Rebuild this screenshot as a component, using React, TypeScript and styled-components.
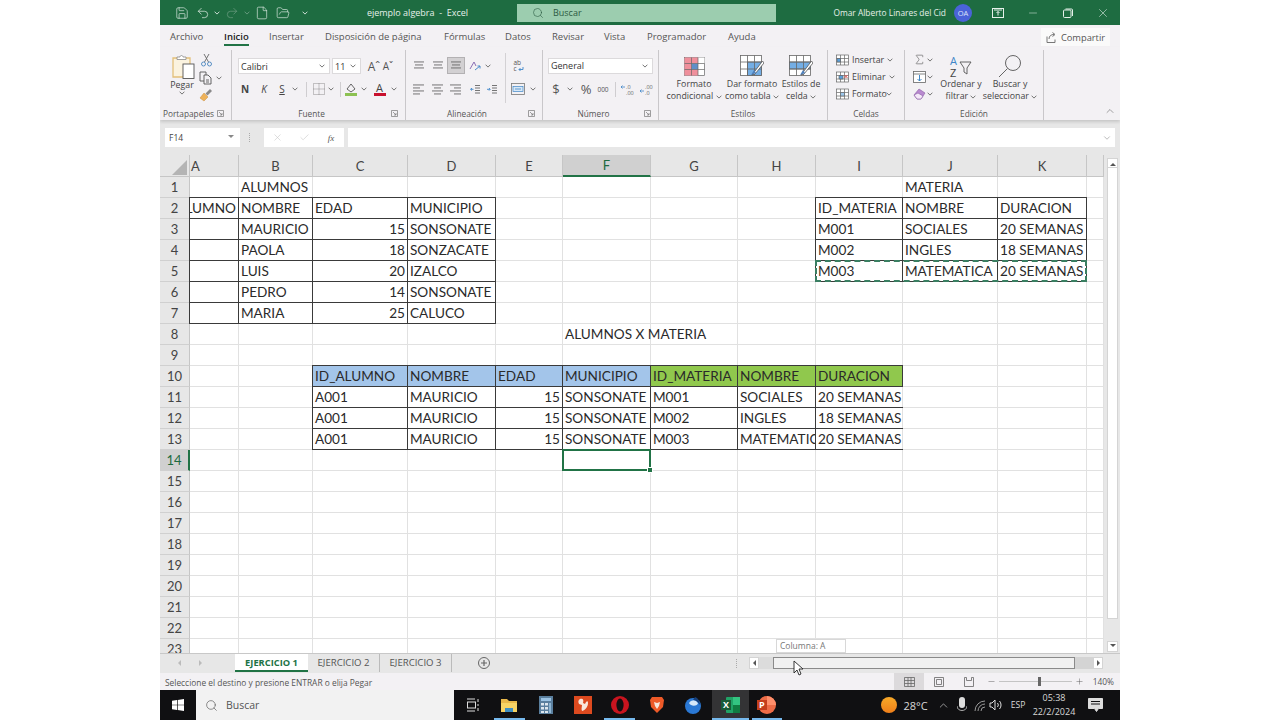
import React from "react";
import styled, { createGlobalStyle } from "styled-components";
import { Save, Undo2, Redo2, File, FolderOpen, Search, Minus, X, Check, ChevronUp, ChevronDown, Plus, Sigma } from "lucide-react";

const GlobalStyle = createGlobalStyle`
	html, body {
		margin: 0;
		padding: 0;
		background: #fff;
		overflow: hidden;
	}
`;

const UI_FONT = `"Open Sans", "Noto Sans", "Liberation Sans", sans-serif`;

const Window = styled.div`
	position: relative;
	width: 960px;
	height: 720px;
	margin: 0 auto;
	display: flex;
	flex-direction: column;
	font-family: ${UI_FONT};
	font-size: 9px;
	color: #444;
	background: #f3f1f4;
	overflow: hidden;
`;

const Slot = styled.div<{ $w: number; $color?: string }>`
	width: ${p => p.$w}px;
	flex: none;
	display: flex;
	align-items: center;
	justify-content: center;
	color: ${p => p.$color || "inherit"};
	svg {
		flex: none;
	}
`;

const Caret = ({ c = "#666" }: { c?: string }) => (
	<svg width="6" height="4" viewBox="0 0 6 4"><path d="M.6.7 3 3.1 5.4.7" fill="none" stroke={c} strokeWidth=".9" /></svg>
);

/* ---------- title bar ---------- */
const TitleBar = styled.div`
	height: 25px;
	flex: none;
	display: flex;
	align-items: center;
	padding-left: 12px;
	background: #1e6c41;
	color: #e6f0ea;
`;

const DocTitle = styled.div`
	width: 199px;
	flex: none;
	text-align: center;
	font-size: 9px;
	white-space: pre;
`;

const SearchBox = styled.div`
	width: 259px;
	height: 18px;
	flex: none;
	display: flex;
	align-items: center;
	background: #9ccdaf;
	color: #2c5a42;
	font-size: 9px;
	padding-left: 15px;
	box-sizing: border-box;
	gap: 9px;
`;

const UserName = styled.div`
	margin-left: auto;
	margin-right: 8px;
	font-size: 8.4px;
	white-space: nowrap;
`;

const Avatar = styled.div`
	width: 18px;
	height: 18px;
	margin-right: 9px;
	border-radius: 50%;
	background: #4a63d8;
	color: #dfe4fa;
	font-size: 7.5px;
	display: flex;
	align-items: center;
	justify-content: center;
	flex: none;
`;

/* ---------- tabs ---------- */
const TabRow = styled.div`
	height: 22px;
	flex: none;
	display: flex;
	align-items: flex-start;
	padding: 4px 0 0 10px;
	box-sizing: border-box;
`;

const RibbonTab = styled.div<{ $w: number; $active?: boolean }>`
	width: ${p => p.$w}px;
	flex: none;
	font-size: 9.5px;
	white-space: nowrap;
	color: ${p => (p.$active ? "#222" : "#555")};
	font-weight: ${p => (p.$active ? 600 : 400)};
	line-height: 15px;
	span {
		display: inline-block;
		border-bottom: ${p => (p.$active ? "2px solid #217346" : "2px solid transparent")};
	}
`;

const ShareButton = styled.div`
	margin-left: auto;
	margin-right: 10px;
	width: 69px;
	height: 18px;
	margin-top: -1px;
	background: #fafafa;
	display: flex;
	align-items: center;
	justify-content: center;
	gap: 4px;
	font-size: 9.3px;
	color: #555;
`;

/* ---------- ribbon ---------- */
const Ribbon = styled.div`
	height: 73px;
	flex: none;
	display: flex;
	position: relative;
	box-shadow: 0 2px 3px rgba(0, 0, 0, .14);
	z-index: 1;
`;

const Group = styled.div<{ $w: number; $last?: boolean }>`
	width: ${p => p.$w}px;
	flex: none;
	box-sizing: border-box;
	display: flex;
	flex-direction: column;
	height: 70px;
	margin-top: 3px;
	border-right: ${p => (p.$last ? "none" : "1px solid #c9c7ca")};
`;

const GroupBody = styled.div<{ $pad?: number }>`
	height: 57px;
	flex: none;
	display: flex;
	padding-left: ${p => p.$pad || 0}px;
`;

const GroupFooter = styled.div<{ $launcher?: boolean }>`
	flex: 1;
	display: grid;
	grid-template-columns: 1fr ${p => (p.$launcher ? "14px" : "0")};
	align-items: center;
	text-align: center;
	font-size: 8.3px;
	color: #555;
`;

const Launcher = () => (
	<svg width="7" height="7" viewBox="0 0 7 7"><path d="M.5.5h6v6h-6zM2 2l3 3M5 3v2H3" fill="none" stroke="#777" strokeWidth=".7" /></svg>
);

const Column = styled.div<{ $top?: number; $gap?: number; $w?: number }>`
	display: flex;
	flex-direction: column;
	padding-top: ${p => p.$top || 0}px;
	gap: ${p => p.$gap || 0}px;
	${p => (p.$w ? `width: ${p.$w}px; flex: none;` : "")}
`;

const ToolRow = styled.div<{ $h?: number }>`
	display: flex;
	align-items: center;
	height: ${p => p.$h || 16}px;
`;

const ToolSep = styled(Slot)`
	&::before {
		content: "";
		display: block;
		width: 1px;
		height: 15px;
		background: #cfcdd0;
	}
`;

const GroupDivider = styled.div`
	width: 1px;
	height: 50px;
	margin-top: 3px;
	flex: none;
	background: #d3d1d4;
`;

const ActiveTool = styled(Slot)`
	height: 17px;
	background: #d2d0d2;
	border: 1px solid #b3b1b3;
	box-sizing: border-box;
`;

const Select = styled.div<{ $w: number; $ml?: number }>`
	width: ${p => p.$w}px;
	height: 16px;
	margin-left: ${p => p.$ml || 0}px;
	flex: none;
	box-sizing: border-box;
	background: #fff;
	border: 1px solid #dcdadc;
	display: flex;
	align-items: center;
	justify-content: space-between;
	padding: 0 4px 0 2px;
	font-size: 9px;
	color: #333;
`;

const BigButton = styled.div<{ $w: number }>`
	width: ${p => p.$w}px;
	flex: none;
	display: flex;
	flex-direction: column;
	align-items: center;
	padding-top: 4px;
	white-space: nowrap;
	font-size: 8.8px;
	line-height: 12px;
	color: #444;
`;

const BigIcon = styled.div<{ $tall?: boolean }>`
	height: ${p => (p.$tall ? 25 : 24)}px;
	display: flex;
	align-items: center;
	justify-content: center;
`;

const CellTool = styled.div`
	height: 17px;
	display: flex;
	align-items: center;
	font-size: 8.8px;
	color: #444;
`;

const CellToolLabel = styled.span<{ $w: number }>`
	width: ${p => p.$w}px;
	margin-left: 3px;
`;

const IconText = styled.text<{ $size: number; $bold?: boolean }>`
	font-family: ${UI_FONT};
	font-size: ${p => p.$size}px;
	font-weight: ${p => (p.$bold ? 700 : 400)};
`;

const BoldLetter = styled.span<{ $italic?: boolean; $under?: boolean }>`
	font-size: 10px;
	font-family: ${UI_FONT};
	font-weight: ${p => (p.$italic || p.$under ? 400 : 700)};
	font-style: ${p => (p.$italic ? "italic" : "normal")};
	text-decoration: ${p => (p.$under ? "underline" : "none")};
	color: #444;
`;

const GrowA = styled.span<{ $size: number }>`
	font-size: ${p => p.$size}px;
	color: #555;
`;

const Lines = ({ rows }: { rows: [number, number][] }) => (
	<svg width="12" height="12" viewBox="0 0 12 12">
		{rows.map(([x, w], i) => <rect key={i} x={x} y={1.5 + i * 3} width={w} height=".9" fill="#666" />)}
	</svg>
);

/* ---------- formula bar ---------- */
const FormulaBar = styled.div`
	height: 35px;
	flex: none;
	box-sizing: border-box;
	padding: 8px 5px 0 5px;
	display: flex;
	align-items: flex-start;
	background: #e7e7e7;
`;

const NameBox = styled.div`
	width: 75px;
	height: 19px;
	flex: none;
	background: #fff;
	box-sizing: border-box;
	padding: 0 6px 0 4px;
	display: flex;
	align-items: center;
	justify-content: space-between;
	font-size: 8.5px;
	color: #444;
`;

const FormulaTools = styled.div`
	width: 80px;
	height: 19px;
	margin-left: 13px;
	flex: none;
	background: #fff;
	display: flex;
	align-items: center;
	font-family: "Liberation Serif", serif;
	font-style: italic;
	font-size: 9px;
`;

const FormulaInput = styled.div`
	flex: 1;
	height: 19px;
	margin-left: 4px;
	background: #fff;
	display: flex;
	align-items: center;
	justify-content: flex-end;
	padding-right: 3px;
`;

const Dots = styled.div`
	width: 1px;
	height: 9px;
	margin: 5px 0 0 9px;
	flex: none;
	border-left: 1px dotted #aaa;
`;

/* ---------- sheet ---------- */
const SheetRow = styled.div`
	height: 498px;
	flex: none;
	display: flex;
	background: #e7e7e7;
`;

const COLS = [30, 49, 74, 95, 88, 67, 88, 87, 78, 87, 95, 89, 17];
const LETTERS = ["A", "B", "C", "D", "E", "F", "G", "H", "I", "J", "K", ""];

const Grid = styled.div`
	position: relative;
	width: 944px;
	height: 498px;
	flex: none;
	overflow: hidden;
	display: grid;
	grid-template-columns: ${COLS.map(c => c + "px").join(" ")};
	grid-template-rows: 22px;
	grid-auto-rows: 21px;
	background: #fff;
	font-family: Lato, Carlito, "Liberation Sans", sans-serif;
	font-size: 13.6px;
	color: #2a2a2a;
`;

const Corner = styled.div`
	background: #e7e7e7;
	border-right: 1px solid #c6c6c6;
	border-bottom: 1px solid #c6c6c6;
	box-sizing: border-box;
	display: flex;
	align-items: flex-end;
	justify-content: flex-end;
	padding: 0 2px 1px 0;
`;

const ColHead = styled.div<{ $on?: boolean; $left?: boolean }>`
	box-sizing: border-box;
	background: ${p => (p.$on ? "#d0d0d0" : "#e7e7e7")};
	border-right: 1px solid #c6c6c6;
	border-bottom: ${p => (p.$on ? "2px solid #217346" : "1px solid #c6c6c6")};
	color: ${p => (p.$on ? "#1d6a3f" : "#444")};
	display: flex;
	align-items: center;
	justify-content: ${p => (p.$left ? "flex-start" : "center")};
	padding-left: ${p => (p.$left ? "1px" : "0")};
	font-size: 13px;
`;

const RowHead = styled.div<{ $on?: boolean }>`
	box-sizing: border-box;
	background: ${p => (p.$on ? "#d0d0d0" : "#e7e7e7")};
	border-right: ${p => (p.$on ? "2px solid #217346" : "1px solid #c6c6c6")};
	border-bottom: 1px solid #d0d0d0;
	color: ${p => (p.$on ? "#1d6a3f" : "#444")};
	display: flex;
	align-items: center;
	justify-content: center;
	font-size: 13px;
`;

const Cell = styled.div<{ $box?: boolean; $open?: boolean; $fill?: string; $active?: boolean }>`
	position: relative;
	box-sizing: border-box;
	min-width: 0;
	background: ${p => p.$fill || "transparent"};
	border-right: 1px solid #e1e1e1;
	border-bottom: 1px solid #e1e1e1;
	${p => p.$box && `
		&::after {
			content: "";
			position: absolute;
			left: -1px;
			top: -1px;
			right: -1px;
			bottom: -1px;
			border: 1px solid #3a3a3a;
			${p.$open ? "border-right: none;" : ""}
		}
	`}
	${p => p.$active && `
		&::after {
			content: "";
			position: absolute;
			left: -1px;
			top: -1px;
			right: -1px;
			bottom: -1px;
			border: 2px solid #217346;
			z-index: 2;
		}
	`}
`;

const CellText = styled.div<{ $align?: string; $spill?: boolean }>`
	height: 20px;
	line-height: 21px;
	white-space: nowrap;
	display: flex;
	justify-content: ${p => (p.$align === "right" ? "flex-end" : "flex-start")};
	padding: ${p => (p.$align === "right" ? "0 2px 0 0" : "0 0 0 2px")};
	overflow: ${p => (p.$spill ? "visible" : "hidden")};
`;

const FillHandle = styled.span`
	position: absolute;
	right: -3px;
	bottom: -3px;
	width: 4px;
	height: 4px;
	background: #217346;
	border: 1px solid #fff;
	z-index: 3;
`;

const MarchingAnts = styled.div`
	position: absolute;
	left: 655px;
	top: 105px;
	width: 272px;
	height: 22px;
	box-sizing: border-box;
	border: 2px dashed #3a7f62;
`;

const VScroll = styled.div`
	width: 16px;
	flex: none;
	display: flex;
	flex-direction: column;
	align-items: flex-start;
	padding: 3px 0 1px 3px;
	box-sizing: border-box;
`;

const ScrollButton = styled.div<{ $w?: number; $h?: number }>`
	width: ${p => p.$w || 11}px;
	height: ${p => p.$h || 11}px;
	flex: none;
	background: #fff;
	border: 1px solid #d4d4d4;
	box-sizing: border-box;
	display: flex;
	align-items: center;
	justify-content: center;
`;

const VThumb = styled.div`
	width: 11px;
	height: 451px;
	flex: none;
	background: #fff;
	margin-bottom: auto;
	box-sizing: border-box;
	border: 1px solid #d4d4d4;
	border-top: none;
`;

const Arrow = styled.span<{ $dir: "up" | "down" | "left" | "right"; $c?: string }>`
	width: 0;
	height: 0;
	border: 3px solid transparent;
	${p => `border-${{ up: "bottom", down: "top", left: "right", right: "left" }[p.$dir]}-color: ${p.$c || "#555"};`}
	${p => `border-${p.$dir}-width: 0;`}
`;

/* ---------- sheet tabs ---------- */
const SheetTabs = styled.div`
	height: 20px;
	flex: none;
	display: flex;
	align-items: flex-start;
	background: #e7e7e7;
	border-top: 1px solid #c8c8c8;
	box-sizing: border-box;
	font-size: 9.6px;
`;

const TabNav = styled.div`
	width: 75px;
	height: 18px;
	flex: none;
	display: flex;
	align-items: center;
	padding-left: 18px;
	box-sizing: border-box;
	gap: 18px;
`;

const SheetTab = styled.div<{ $active?: boolean }>`
	width: ${p => (p.$active ? 73 : 72)}px;
	height: 18px;
	flex: none;
	box-sizing: border-box;
	display: flex;
	align-items: center;
	justify-content: center;
	padding-bottom: ${p => (p.$active ? 0 : 2)}px;
	background: ${p => (p.$active ? "#fff" : "transparent")};
	color: ${p => (p.$active ? "#217346" : "#555")};
	font-weight: ${p => (p.$active ? 700 : 400)};
	font-size: ${p => (p.$active ? 9.3 : 9.6)}px;
	border-bottom: ${p => (p.$active ? "2px solid #217346" : "none")};
	border-right: ${p => (p.$active ? "none" : "1px solid #bbb")};
`;

const AddSheet = styled.div`
	width: 64px;
	height: 18px;
	flex: none;
	display: flex;
	align-items: center;
	justify-content: center;
`;

const HScroll = styled.div`
	margin-left: auto;
	margin-right: 17px;
	margin-top: 3px;
	width: 354px;
	height: 12px;
	flex: none;
	display: flex;
	align-items: stretch;
	position: relative;
`;

const HTrack = styled.div<{ $w: number; $dither?: boolean }>`
	width: ${p => p.$w}px;
	flex: none;
	background: ${p => (p.$dither ? "#d4d4d4" : "#dcdcdc")};
`;

const HThumb = styled.div`
	width: 302px;
	flex: none;
	box-sizing: border-box;
	background: #f1f1f1;
	border: 1px solid #8a8a8a;
`;

const SplitDots = styled.div`
	position: absolute;
	left: -13px;
	top: 2px;
	height: 9px;
	border-left: 1px dotted #aaa;
`;

const Tooltip = styled.div`
	position: absolute;
	left: 616px;
	top: 639px;
	width: 70px;
	height: 14px;
	box-sizing: border-box;
	background: #fff;
	border: 1px solid #d8d8d8;
	font-size: 8.5px;
	color: #777;
	padding-left: 3px;
	line-height: 12px;
`;

const Pointer = styled.svg`
	position: absolute;
	left: 633px;
	top: 660px;
`;

/* ---------- status bar ---------- */
const StatusBar = styled.div`
	height: 17px;
	flex: none;
	display: flex;
	align-items: center;
	padding-left: 5px;
	font-size: 8.4px;
	color: #555;
	white-space: nowrap;
`;

const StatusMessage = styled.div`
	margin-right: auto;
	padding-top: 1px;
`;

const ViewButton = styled.div<{ $on?: boolean }>`
	width: 30px;
	height: 17px;
	flex: none;
	background: ${p => (p.$on ? "#dcdadc" : "transparent")};
	display: flex;
	align-items: center;
	justify-content: center;
`;

const ZoomTrack = styled.div`
	position: relative;
	width: 73px;
	height: 1px;
	background: #c4c4c4;
	flex: none;
`;

const ZoomThumb = styled.span`
	position: absolute;
	left: 39px;
	top: -4px;
	width: 3px;
	height: 9px;
	background: #666;
`;

const ZoomValue = styled.div`
	width: 28px;
	text-align: right;
	margin-right: 6px;
	font-size: 8.4px;
	flex: none;
`;

/* ---------- taskbar ---------- */
const Taskbar = styled.div`
	height: 30px;
	flex: none;
	display: flex;
	align-items: stretch;
	background: #101012;
	color: #d8d8d8;
`;

const TaskSearch = styled.div`
	width: 258px;
	flex: none;
	background: #f2f2f2;
	color: #555;
	display: flex;
	align-items: center;
	padding-left: 9px;
	box-sizing: border-box;
	font-size: 10.5px;
	gap: 8px;
`;

const TaskIcon = styled.div<{ $active?: boolean; $open?: boolean }>`
	position: relative;
	width: 36.8px;
	flex: none;
	box-sizing: border-box;
	display: flex;
	align-items: center;
	justify-content: center;
	background: ${p => (p.$active ? "#333335" : "transparent")};
	${p => p.$open && `
		&::after {
			content: "";
			position: absolute;
			left: ${p.$active ? 0 : 3}px;
			right: ${p.$active ? 0 : 3}px;
			bottom: 0;
			height: 2px;
			background: #76b9ed;
		}
	`}
`;

const Tray = styled.div`
	margin-left: auto;
	display: flex;
	align-items: center;
	padding-right: 6px;
	font-size: 10px;
`;

const Clock = styled(Slot)`
	flex-direction: column;
	font-size: 9px;
	line-height: 14px;
`;

const Temp = styled(Slot)`
	font-size: 11px;
`;

const Lang = styled(Slot)`
	font-size: 8.6px;
`;

/* ---------- data ---------- */
type Spec = { t?: string; box?: boolean; open?: boolean; fill?: string; right?: boolean; spill?: boolean };
const b = (t = "", extra: Spec = {}): Spec => ({ t, box: true, ...extra });
const BLUE = "#a3c5ea";
const GREEN = "#90c84d";

const alumnos: [string, number, string][] = [
	["MAURICIO", 15, "SONSONATE"],
	["PAOLA", 18, "SONZACATE"],
	["LUIS", 20, "IZALCO"],
	["PEDRO", 14, "SONSONATE"],
	["MARIA", 25, "CALUCO"],
];
const materias = [
	["M001", "SOCIALES", "20 SEMANAS"],
	["M002", "INGLES", "18 SEMANAS"],
	["M003", "MATEMATICA", "20 SEMANAS"],
];

const sheet: Record<number, Record<string, Spec>> = {
	1: { B: { t: "ALUMNOS", spill: true }, J: { t: "MATERIA" } },
	2: {
		A: b("ID_ALUMNO", { right: true }), B: b("NOMBRE"), C: b("EDAD"), D: b("MUNICIPIO"),
		I: b("ID_MATERIA"), J: b("NOMBRE"), K: b("DURACION"),
	},
	8: { F: { t: "ALUMNOS X MATERIA", spill: true } },
	10: {
		C: b("ID_ALUMNO", { fill: BLUE }), D: b("NOMBRE", { fill: BLUE }), E: b("EDAD", { fill: BLUE }), F: b("MUNICIPIO", { fill: BLUE }),
		G: b("ID_MATERIA", { fill: GREEN }), H: b("NOMBRE", { fill: GREEN }), I: b("DURACION", { fill: GREEN }),
	},
};
alumnos.forEach(([name, age, town], i) => {
	sheet[i + 3] = { A: b(), B: b(name), C: b(String(age), { right: true }), D: b(town) };
});
materias.forEach(([id, name, weeks], i) => {
	sheet[i + 3] = { ...sheet[i + 3], I: b(id), J: b(name), K: b(weeks) };
	sheet[i + 11] = {
		C: b("A001"), D: b("MAURICIO"), E: b("15", { right: true }), F: b("SONSONATE"),
		G: b(id), H: b(name), I: b(weeks, { open: true }),
	};
});

const Sheet = () => (
	<Grid>
		<Corner>
			<svg width="15" height="15" viewBox="0 0 15 15"><path d="M15 0v15H0z" fill="#b4b4b4" /></svg>
		</Corner>
		{LETTERS.map(l => <ColHead key={l} $on={l === "F"} $left={l === "A"}>{l}</ColHead>)}
		{Array.from({ length: 23 }, (_, r) => r + 1).map(row => (
			<React.Fragment key={row}>
				<RowHead $on={row === 14}>{row}</RowHead>
				{LETTERS.map((l, i) => {
					const s = sheet[row]?.[l];
					const active = row === 14 && l === "F";
					return (
						<Cell key={i} $box={s?.box} $open={s?.open} $fill={s?.fill} $active={active}>
							{s?.t && <CellText $align={s.right ? "right" : "left"} $spill={s.spill}><span>{s.t}</span></CellText>}
							{active && <FillHandle />}
						</Cell>
					);
				})}
			</React.Fragment>
		))}
		<MarchingAnts />
	</Grid>
);

/* ---------- ribbon drawings ---------- */
const PasteIcon = () => (
	<svg width="25" height="25" viewBox="0 0 25 25" fill="none">
		<path d="M3 4h17v19H3z" fill="#fbf3df" stroke="#e3c07a" strokeWidth="1.3" />
		<path d="M7 5.500V3h3c0-2 3-2 3 0h3v2.500z" fill="#fff" stroke="#8a8a8a" strokeWidth=".8" />
		<rect x="13" y="10" width="11" height="14.500" fill="#fff" stroke="#555" strokeWidth=".9" />
	</svg>
);
const Scissors = () => (
	<svg width="13" height="14" viewBox="0 0 13 14" fill="none" strokeWidth=".9">
		<path d="M4 1l4.500 8M9 1 4.500 9" stroke="#666" />
		<circle cx="3.500" cy="11" r="2" stroke="#4a86c0" /><circle cx="9.500" cy="11" r="2" stroke="#4a86c0" />
	</svg>
);
const CopyIcon = () => (
	<svg width="14" height="14" viewBox="0 0 14 14" fill="none" stroke="#555" strokeWidth=".9">
		<path d="M1 1h6v9H1z" /><path d="M5 4h4l3 3v6H5z" fill="#f3f1f4" /><path d="M7 9h3M7 11h3" />
	</svg>
);
const BrushIcon = () => (
	<svg width="14" height="14" viewBox="0 0 14 14">
		<path d="M1 10l4-5 4 4-4 4z" fill="#eeb25a" stroke="#c98d3a" strokeWidth=".5" /><path d="M6.500 5.500 11 1l2 2-4.500 4.500z" fill="#8a8a8a" />
	</svg>
);
const BordersIcon = () => (
	<svg width="12" height="12" viewBox="0 0 12 12" fill="none" stroke="#777" strokeWidth=".8" strokeDasharray="1 1">
		<path d="M.5.5h11v11H.5zM6 .5v11M.5 6h11" />
	</svg>
);
const FillIcon = () => (
	<svg width="14" height="14" viewBox="0 0 14 14">
		<path d="M3 7l4-5 4 5-4 3z" fill="none" stroke="#555" strokeWidth=".9" />
		<rect x="1" y="11" width="12" height="3" fill="#8cc152" />
	</svg>
);
const FontColor = () => (
	<svg width="14" height="14" viewBox="0 0 14 14">
		<IconText x="3" y="10" $size={11} fill="#444">A</IconText>
		<rect x="1" y="11" width="12" height="3" fill="#c8102e" />
	</svg>
);
const OrientIcon = () => (
	<svg width="12" height="12" viewBox="0 0 12 12" fill="none">
		<path d="M1 9l4-7 2 4" stroke="#8a6fb5" /><path d="M6 10l5-4M11 6H8.500M11 6v2.500" stroke="#4a8ac8" />
	</svg>
);
const Indent = ({ flip }: { flip?: boolean }) => (
	<svg width="12" height="12" viewBox="0 0 12 12" fill="none">
		<path d="M6 2.500h5M6 5h5M6 7.500h5M6 10h5" stroke="#666" strokeWidth=".9" />
		<path d={flip ? "M1 6.300h3M3 5l1.200 1.300L3 7.600" : "M4.500 6.300h-3M3 5 1.700 6.300 3 7.600"} stroke="#3f87c8" strokeWidth=".9" />
	</svg>
);
const WrapIcon = () => (
	<svg width="13" height="14" viewBox="0 0 13 14" fill="none">
		<IconText x="1.500" y="6" $size={6.500} fill="#555">ab</IconText>
		<IconText x="1.500" y="12" $size={6.500} fill="#555">c</IconText>
		<path d="M11 8v2.500H7M8.500 9 7 10.500 8.500 12" stroke="#3f87c8" strokeWidth=".9" />
	</svg>
);
const MergeIcon = () => (
	<svg width="14" height="12" viewBox="0 0 14 12" fill="none">
		<rect x=".5" y=".5" width="13" height="11" stroke="#777" strokeWidth=".8" />
		<rect x="2" y="3.500" width="10" height="5" fill="#d8e8f6" stroke="#3f87c8" strokeWidth=".7" />
		<path d="M4 6h6" stroke="#3f87c8" strokeWidth=".8" />
	</svg>
);
const Decimal = ({ flip }: { flip?: boolean }) => (
	<svg width="14" height="13" viewBox="0 0 14 13" fill="none">
		<IconText x="6" y="5.500" $size={5.500} fill="#666">{flip ? ".00" : ".0"}</IconText>
		<IconText x="6" y="12" $size={5.500} fill="#666">{flip ? ".0" : ".00"}</IconText>
		<path d="M5 4H1M2.500 2.500 1 4l1.500 1.500" stroke="#3f87c8" strokeWidth=".8" transform={flip ? "translate(0,4)" : undefined} />
	</svg>
);
const CondFormat = () => (
	<svg width="21" height="19" viewBox="0 0 21 19" fill="none" stroke="#666" strokeWidth=".7">
		<rect x=".5" y=".5" width="20" height="18" fill="#fff" />
		<path d="M.5.5h7v18h-7zM7.500.5h6.500v6H7.500zM7.500 12.500h6.500v6H7.500z" fill="#ef8f9b" stroke="none" />
		<path d="M7.500 6.500H14v6H7.500z" fill="#5f8fc8" stroke="none" />
		<path d="M14 .5h6.500v6H14z" fill="#fff" stroke="none" />
		<path d="M7.500.5v18M14 .5v18M.5 6.500h20M.5 12.500h20" />
	</svg>
);
const TableFormat = ({ cell }: { cell?: boolean }) => (
	<svg width="24" height="22" viewBox="0 0 24 22" fill="none" stroke="#666" strokeWidth=".8">
		<rect x=".5" y=".5" width="21" height="20" fill="#fff" />
		<rect x={cell ? 0.5 : 7.5} y="7" width={cell ? 21 : 14} height={cell ? 7 : 13.5} fill="#74aee5" />
		<path d="M.5 7h21M7.500.5v20M14.500.5v20M.5 14h21" />
		<path d="M22.500 6 15 16l-3 4 3-1 9-11z" fill="#fff" stroke="#555" />
		<path d="M14 15l-3 5 5-2z" fill="#4f81bd" stroke="none" />
	</svg>
);
const TableSmall = ({ mark }: { mark: "ins" | "del" | "fmt" }) => (
	<svg width="13" height="12" viewBox="0 0 13 12" fill="none" stroke="#666" strokeWidth=".7">
		<rect x=".5" y="1" width="12" height="10" fill="#fff" />
		<path d="M.5 4.500h12M.5 8h12M4.500 1v10M8.500 1v10" />
		{mark === "ins" && <path d="M1 4.500h3.500V8H1z" fill="#5aa0dc" />}
		{mark === "del" && <path d="M3 4.500h4V8H3z" fill="#5aa0dc" />}
		{mark === "del" && <path d="M8.500 4l3 3M11.500 4l-3 3" stroke="#d9534f" strokeWidth="1" />}
		{mark === "fmt" && <path d="M4.500 4.500h4V8h-4z" fill="#9cc7ec" />}
	</svg>
);
const FillDown = () => (
	<svg width="13" height="12" viewBox="0 0 13 12" fill="none">
		<rect x=".5" y=".5" width="12" height="11" fill="#fff" stroke="#666" strokeWidth=".8" />
		<path d="M.5 3h12" stroke="#666" strokeWidth=".8" />
		<path d="M6.500 4v6M4.500 8l2 2 2-2" stroke="#3f87c8" />
	</svg>
);
const Eraser = () => (
	<svg width="13" height="12" viewBox="0 0 13 12">
		<path d="M1 7l5-6 6 4-4 6H4z" fill="#b98ad0" stroke="#8a5ba5" strokeWidth=".6" />
		<path d="M1 7l3 4h4l2-3-5-3z" fill="#f4e8f8" stroke="#8a5ba5" strokeWidth=".6" />
	</svg>
);
const SortFilter = () => (
	<svg width="24" height="25" viewBox="0 0 24 25" fill="none">
		<IconText x="1" y="11" $size={11} fill="#3f87c8">A</IconText>
		<IconText x="1" y="23" $size={11} fill="#444">Z</IconText>
		<path d="M11 8h11l-4 6v6l-3-2v-4z" stroke="#555" strokeWidth=".9" />
	</svg>
);
const Magnifier = () => (
	<svg width="24" height="25" viewBox="0 0 24 25" fill="none" stroke="#555" strokeWidth=".9">
		<circle cx="15" cy="9" r="7.500" /><path d="M9.500 14.500 1 23" />
	</svg>
);

const Clip = () => (
	<Group $w={72}>
		<GroupBody>
			<BigButton $w={44}>
				<BigIcon $tall><PasteIcon /></BigIcon>
				<span>Pegar</span>
				<Caret />
			</BigButton>
			<Column $top={1}>
				<ToolRow $h={18}><Slot $w={4}><Scissors /></Slot></ToolRow>
				<ToolRow $h={17}><Slot $w={4}><CopyIcon /></Slot><Slot $w={22}><Caret /></Slot></ToolRow>
				<ToolRow $h={17}><Slot $w={4}><BrushIcon /></Slot></ToolRow>
			</Column>
		</GroupBody>
		<GroupFooter $launcher><span>Portapapeles</span><Launcher /></GroupFooter>
	</Group>
);

const FontSpacer = styled.div`
	width: 6px;
	flex: none;
`;

const Font = () => (
	<Group $w={174}>
		<GroupBody $pad={6}>
			<Column $top={8} $gap={7}>
				<ToolRow>
					<Select $w={92}>Calibri<Caret /></Select>
					<Select $w={29} $ml={2}>11<Caret /></Select>
					<FontSpacer />
					<Slot $w={14}><GrowA $size={12}>Aˆ</GrowA></Slot>
					<Slot $w={14}><GrowA $size={10}>Aˇ</GrowA></Slot>
				</ToolRow>
				<ToolRow>
					<Slot $w={14}><BoldLetter>N</BoldLetter></Slot>
					<Slot $w={24}><BoldLetter $italic>K</BoldLetter></Slot>
					<Slot $w={12}><BoldLetter $under>S</BoldLetter></Slot>
					<Slot $w={14}><Caret /></Slot>
					<ToolSep $w={8} />
					<Slot $w={18}><BordersIcon /></Slot>
					<Slot $w={6}><Caret /></Slot>
					<ToolSep $w={12} />
					<Slot $w={10}><FillIcon /></Slot>
					<Slot $w={16}><Caret /></Slot>
					<Slot $w={16}><FontColor /></Slot>
					<Slot $w={12}><Caret /></Slot>
				</ToolRow>
			</Column>
		</GroupBody>
		<GroupFooter $launcher><span>Fuente</span><Launcher /></GroupFooter>
	</Group>
);

const Align = () => (
	<Group $w={137}>
		<GroupBody $pad={4}>
			<Column $top={7} $gap={6} $w={95}>
				<ToolRow $h={17}>
					<Slot $w={18}><Lines rows={[[1, 10], [2, 8], [1, 10]]} /></Slot>
					<Slot $w={19}><Lines rows={[[1, 10], [2, 8], [1, 10]]} /></Slot>
					<ActiveTool $w={18}><Lines rows={[[1, 10], [2, 8], [1, 10]]} /></ActiveTool>
					<Slot $w={19}><OrientIcon /></Slot>
					<Slot $w={7}><Caret /></Slot>
				</ToolRow>
				<ToolRow $h={17}>
					<Slot $w={18}><Lines rows={[[0, 11], [0, 7], [0, 11], [0, 7]]} /></Slot>
					<Slot $w={19}><Lines rows={[[0, 11], [2, 7], [0, 11], [2, 7]]} /></Slot>
					<Slot $w={18}><Lines rows={[[0, 11], [4, 7], [0, 11], [4, 7]]} /></Slot>
					<Slot $w={19}><Indent /></Slot>
					<Slot $w={15}><Indent flip /></Slot>
				</ToolRow>
			</Column>
			<GroupDivider />
			<Column $top={7} $gap={6}>
				<ToolRow $h={17}><Slot $w={24}><WrapIcon /></Slot></ToolRow>
				<ToolRow $h={17}><Slot $w={24}><MergeIcon /></Slot><Slot $w={6}><Caret /></Slot></ToolRow>
			</Column>
		</GroupBody>
		<GroupFooter $launcher><span>Alineación</span><Launcher /></GroupFooter>
	</Group>
);

const NumberGroup = () => (
	<Group $w={116}>
		<GroupBody $pad={5}>
			<Column $top={7} $gap={7}>
				<ToolRow $h={17}><Select $w={105}>General<Caret /></Select></ToolRow>
				<ToolRow>
					<Slot $w={16}><GrowA $size={13}>$</GrowA></Slot>
					<Slot $w={12}><Caret /></Slot>
					<Slot $w={20}><GrowA $size={13}>%</GrowA></Slot>
					<Slot $w={14}><GrowA $size={6.500}>000</GrowA></Slot>
					<ToolSep $w={10} />
					<Slot $w={14}><Decimal /></Slot>
					<Slot $w={24}><Decimal flip /></Slot>
				</ToolRow>
			</Column>
		</GroupBody>
		<GroupFooter $launcher><span>Número</span><Launcher /></GroupFooter>
	</Group>
);

const Styles = () => (
	<Group $w={169}>
		<GroupBody $pad={4}>
			<BigButton $w={62}>
				<BigIcon><CondFormat /></BigIcon>
				<span>Formato</span>
				<span>condicional <Caret /></span>
			</BigButton>
			<BigButton $w={54}>
				<BigIcon><TableFormat /></BigIcon>
				<span>Dar formato</span>
				<span>como tabla <Caret /></span>
			</BigButton>
			<BigButton $w={44}>
				<BigIcon><TableFormat cell /></BigIcon>
				<span>Estilos de</span>
				<span>celda <Caret /></span>
			</BigButton>
		</GroupBody>
		<GroupFooter><span>Estilos</span></GroupFooter>
	</Group>
);

const Cells = () => (
	<Group $w={77}>
		<GroupBody $pad={8}>
			<Column $top={1}>
				<CellTool><TableSmall mark="ins" /><CellToolLabel $w={35}>Insertar</CellToolLabel><Caret /></CellTool>
				<CellTool><TableSmall mark="del" /><CellToolLabel $w={37}>Eliminar</CellToolLabel><Caret /></CellTool>
				<CellTool><TableSmall mark="fmt" /><CellToolLabel $w={34}>Formato</CellToolLabel><Caret /></CellTool>
			</Column>
		</GroupBody>
		<GroupFooter><span>Celdas</span></GroupFooter>
	</Group>
);

const Editing = () => (
	<Group $w={139}>
		<GroupBody $pad={7}>
			<Column $top={1} $w={21}>
				<CellTool><Slot $w={14}><Sigma size={13} strokeWidth={1} /></Slot><Slot $w={7}><Caret /></Slot></CellTool>
				<CellTool><Slot $w={14}><FillDown /></Slot><Slot $w={7}><Caret /></Slot></CellTool>
				<CellTool><Slot $w={14}><Eraser /></Slot><Slot $w={7}><Caret /></Slot></CellTool>
			</Column>
			<BigButton $w={56}>
				<BigIcon><SortFilter /></BigIcon>
				<span>Ordenar y</span>
				<span>filtrar <Caret /></span>
			</BigButton>
			<BigButton $w={42}>
				<BigIcon><Magnifier /></BigIcon>
				<span>Buscar y</span>
				<span>seleccionar <Caret /></span>
			</BigButton>
		</GroupBody>
		<GroupFooter><span>Edición</span></GroupFooter>
	</Group>
);

const Collapse = styled.div`
	margin-left: auto;
	align-self: flex-end;
	margin-right: 4px;
	color: #666;
`;

/* ---------- taskbar logos ---------- */
const StartLogo = () => (
	<svg width="12" height="12" viewBox="0 0 12 12" fill="#fff">
		<path d="M0 1.700 5 1v4.700H0zM5.700.9 12 0v5.700H5.700zM0 6.300h5V11l-5-.7zM5.700 6.300H12V12l-6.300-.9z" />
	</svg>
);
const TaskViewIcon = () => (
	<svg width="14" height="14" viewBox="0 0 14 14" fill="none" stroke="#ddd">
		<path d="M1 1h8M1 13h8" /><rect x="1.500" y="4" width="8" height="6" /><path d="M12 1v3M12 6v2M12 10v3" />
	</svg>
);
const ExplorerLogo = () => (
	<svg width="18" height="16" viewBox="0 0 18 16">
		<path d="M1 2h6l2 2h8v11H1z" fill="#e8b84a" /><path d="M1 6h16v9H1z" fill="#f6d365" />
		<path d="M5 11h8v4H5z" fill="#3d8fc4" />
	</svg>
);
const CalcLogo = () => (
	<svg width="14" height="18" viewBox="0 0 14 18">
		<rect width="14" height="18" fill="#5a7f9e" /><rect x="2" y="2" width="10" height="3" fill="#9cc4e4" />
		<path d="M2 7h3v2.500H2zM6 7h3v2.500H6zM2 11h3v2.500H2zM6 11h3v2.500H6zM2 15h3v2H2zM6 15h3v2H6z" fill="#dce6ee" />
		<path d="M10 7h2v10h-2z" fill="#8fb6d4" />
	</svg>
);
const RedAppLogo = () => (
	<svg width="18" height="18" viewBox="0 0 18 18">
		<rect width="18" height="18" fill="#dd4a1f" />
		<path d="M6 3c3-1 4 1 3 4l2 1c1-3 3-4 3-1s-2 7-6 8c-1-2 0-4 0-6L5 8C4 6 4 4 6 3z" fill="#f8e7dc" />
	</svg>
);
const OperaLogo = () => (
	<svg width="18" height="18" viewBox="0 0 18 18">
		<circle cx="9" cy="9" r="9" fill="#c8141f" /><ellipse cx="9" cy="9" rx="3.600" ry="6.500" fill="#101012" />
	</svg>
);
const BraveLogo = () => (
	<svg width="16" height="18" viewBox="0 0 16 18">
		<path d="M3 1h10l2 3-1 7-6 6-6-6-1-7z" fill="#ee5a28" /><path d="M5 6l3 1 3-1-1 4-2 3-2-3z" fill="#f6e6dc" />
	</svg>
);
const ThunderbirdLogo = () => (
	<svg width="18" height="18" viewBox="0 0 18 18">
		<circle cx="9" cy="10" r="8" fill="#2a78d4" /><path d="M5 7a5 5 0 0 1 9 0c0 3-7 4-9 0z" fill="#d6e8f9" />
		<path d="M11 1c3 1 5 4 5 8-2-3-4-5-7-5z" fill="#173f78" />
	</svg>
);
const ExcelLogo = () => (
	<svg width="19" height="18" viewBox="0 0 19 18">
		<rect x="5" y="1" width="14" height="16" rx="1" fill="#21a366" /><rect x="12" y="1" width="7" height="8" fill="#33c481" />
		<rect x="12" y="9" width="7" height="8" fill="#107c41" />
		<rect y="4" width="10" height="10" fill="#185c37" />
		<IconText x="2" y="12" $size={9} $bold fill="#fff">X</IconText>
	</svg>
);
const PowerLogo = () => (
	<svg width="19" height="18" viewBox="0 0 19 18">
		<circle cx="10" cy="9" r="9" fill="#ed6c47" /><path d="M10 0a9 9 0 0 1 9 9h-9z" fill="#ff8f6b" />
		<rect y="4" width="10" height="10" fill="#c43e1c" />
		<IconText x="2" y="12" $size={9} $bold fill="#fff">P</IconText>
	</svg>
);
const Sun = () => (
	<svg width="16" height="16" viewBox="0 0 16 16">
		<defs><linearGradient id="sun" x1="0" y1="0" x2="0" y2="1"><stop offset="0" stopColor="#f7a928" /><stop offset="1" stopColor="#ef7f1a" /></linearGradient></defs>
		<circle cx="8" cy="8" r="8" fill="url(#sun)" />
	</svg>
);
const Mic = () => (
	<svg width="10" height="16" viewBox="0 0 10 16"><rect x="2" y="0" width="6" height="11" rx="3" fill="#ddd" /><path d="M0 9c0 6 10 6 10 0" fill="none" stroke="#aaa" /></svg>
);
const Wifi = () => (
	<svg width="14" height="14" viewBox="0 0 14 14" fill="none" stroke="#999">
		<path d="M3 13a10 10 0 0 1 10-10M6 13a7 7 0 0 1 7-7M9 13a4 4 0 0 1 4-4" />
	</svg>
);
const Speaker = () => (
	<svg width="14" height="14" viewBox="0 0 14 14" fill="none" stroke="#ddd">
		<path d="M1 5h2l3-3v10l-3-3H1z" /><path d="M8.500 5a3 3 0 0 1 0 4M10.500 3a6 6 0 0 1 0 8" />
	</svg>
);
const NotifyIcon = () => (
	<svg width="15" height="14" viewBox="0 0 15 14" fill="none" stroke="#ddd">
		<path d="M.5.5h14v10h-4l-2 3-2-3h-6z" fill="#ddd" /><path d="M3 3.500h9M3 6h9" stroke="#101012" />
	</svg>
);

export default function App() {
	return (
		<Window>
			<GlobalStyle />
			<TitleBar>
				<Slot $w={20}><Save size={14} strokeWidth={1.1} /></Slot>
				<Slot $w={21}><Undo2 size={14} strokeWidth={1.2} /></Slot>
				<Slot $w={7}><Caret c="#dfe9e3" /></Slot>
				<Slot $w={24} $color="#6d9e83"><Redo2 size={14} strokeWidth={1.2} /></Slot>
				<Slot $w={6}><Caret c="#6d9e83" /></Slot>
				<Slot $w={24}><File size={14} strokeWidth={1.1} /></Slot>
				<Slot $w={18}><FolderOpen size={14} strokeWidth={1.1} /></Slot>
				<Slot $w={26}><Caret c="#dfe9e3" /></Slot>
				<DocTitle>ejemplo algebra  -  Excel</DocTitle>
				<SearchBox><Search size={12} strokeWidth={1.2} />Buscar</SearchBox>
				<UserName>Omar Alberto Linares del Cid</UserName>
				<Avatar>OA</Avatar>
				<Slot $w={34}>
					<svg width="12" height="10" viewBox="0 0 12 10" fill="none" stroke="#e6f0ea"><rect x=".5" y=".5" width="11" height="9" /><path d="M6 7.500V3.500M4.500 5 6 3.500 7.500 5M2 2h8" /></svg>
				</Slot>
				<Slot $w={35}><Minus size={12} strokeWidth={1} /></Slot>
				<Slot $w={35}>
					<svg width="10" height="10" viewBox="0 0 10 10" fill="none" stroke="#e6f0ea"><rect x=".5" y="2" width="7.500" height="7.500" rx="1" /><path d="M2.500 1h6a1 1 0 0 1 1 1v6" /></svg>
				</Slot>
				<Slot $w={35}><X size={14} strokeWidth={1} /></Slot>
			</TitleBar>

			<TabRow>
				{([["Archivo", 54], ["Inicio", 45], ["Insertar", 56], ["Disposición de página", 119], ["Fórmulas", 61], ["Datos", 47], ["Revisar", 52], ["Vista", 43], ["Programador", 81], ["Ayuda", 40]] as [string, number][]).map(([t, w]) => (
					<RibbonTab key={t} $w={w} $active={t === "Inicio"}><span>{t}</span></RibbonTab>
				))}
				<ShareButton>
					<svg width="11" height="11" viewBox="0 0 11 11" fill="none" stroke="#777"><path d="M1 4.500v6h8v-3M3 7c0-3 2-4.500 5-4.500M6.500.5l2.500 2-2.500 2" /></svg>
					Compartir
				</ShareButton>
			</TabRow>

			<Ribbon>
				<Clip />
				<Font />
				<Align />
				<NumberGroup />
				<Styles />
				<Cells />
				<Editing />
				<Collapse><ChevronUp size={12} strokeWidth={1.2} /></Collapse>
			</Ribbon>

			<FormulaBar>
				<NameBox>F14<Arrow $dir="down" $c="#888" /></NameBox>
				<Dots />
				<FormulaTools>
					<Slot $w={27} $color="#c4c4c4"><X size={11} strokeWidth={1.2} /></Slot>
					<Slot $w={27} $color="#c4c4c4"><Check size={11} strokeWidth={1.2} /></Slot>
					<Slot $w={26} $color="#555">fx</Slot>
				</FormulaTools>
				<FormulaInput><ChevronDown size={10} strokeWidth={1.2} color="#777" /></FormulaInput>
			</FormulaBar>

			<SheetRow>
				<Sheet />
				<VScroll>
					<ScrollButton $h={10}><Arrow $dir="up" /></ScrollButton>
					<VThumb />
					<ScrollButton $h={11}><Arrow $dir="down" /></ScrollButton>
				</VScroll>
			</SheetRow>

			<SheetTabs>
				<TabNav><Arrow $dir="left" $c="#bbb" /><Arrow $dir="right" $c="#bbb" /></TabNav>
				<SheetTab $active>EJERCICIO 1</SheetTab>
				<SheetTab>EJERCICIO 2</SheetTab>
				<SheetTab>EJERCICIO 3</SheetTab>
				<AddSheet>
					<svg width="12" height="12" viewBox="0 0 12 12" fill="none" stroke="#666"><circle cx="6" cy="6" r="5.500" /><path d="M3 6h6M6 3v6" strokeWidth="1.200" /></svg>
				</AddSheet>
				<HScroll>
					<SplitDots />
					<ScrollButton $w={10} $h={12}><Arrow $dir="left" /></ScrollButton>
					<HTrack $w={14} />
					<HThumb />
					<HTrack $w={18} $dither />
					<ScrollButton $w={10} $h={12}><Arrow $dir="right" /></ScrollButton>
				</HScroll>
			</SheetTabs>

			<StatusBar>
				<StatusMessage>Seleccione el destino y presione ENTRAR o elija Pegar</StatusMessage>
				<ViewButton $on>
					<svg width="11" height="10" viewBox="0 0 11 10" fill="none" stroke="#666" strokeWidth=".8"><path d="M.5.5h10v9H.5zM.5 3.500h10M.5 6.500h10M4 .5v9M7 .5v9" /></svg>
				</ViewButton>
				<ViewButton>
					<svg width="10" height="10" viewBox="0 0 10 10" fill="none" stroke="#666" strokeWidth=".8"><path d="M.5.5h9v9h-9zM2.500 2.500h5v5h-5z" /></svg>
				</ViewButton>
				<ViewButton>
					<svg width="10" height="10" viewBox="0 0 10 10" fill="none" stroke="#666" strokeWidth=".8"><path d="M.5 9.500h9V.5h-2v3h-5v-3h-2z" /></svg>
				</ViewButton>
				<Slot $w={15}><Minus size={9} strokeWidth={1.2} /></Slot>
				<ZoomTrack><ZoomThumb /></ZoomTrack>
				<Slot $w={14}><Plus size={9} strokeWidth={1.2} /></Slot>
				<ZoomValue>140%</ZoomValue>
			</StatusBar>

			<Taskbar>
				<Slot $w={36}><StartLogo /></Slot>
				<TaskSearch><Search size={13} strokeWidth={1.2} />Buscar</TaskSearch>
				<Slot $w={37}><TaskViewIcon /></Slot>
				<TaskIcon $open><ExplorerLogo /></TaskIcon>
				<TaskIcon><CalcLogo /></TaskIcon>
				<TaskIcon><RedAppLogo /></TaskIcon>
				<TaskIcon $open><OperaLogo /></TaskIcon>
				<TaskIcon><BraveLogo /></TaskIcon>
				<TaskIcon><ThunderbirdLogo /></TaskIcon>
				<TaskIcon $active $open><ExcelLogo /></TaskIcon>
				<TaskIcon $open><PowerLogo /></TaskIcon>
				<Tray>
					<Slot $w={20}><Sun /></Slot>
					<Temp $w={33}>28°C</Temp>
					<Slot $w={22}><ChevronUp size={13} strokeWidth={1.2} /></Slot>
					<Slot $w={16}><Mic /></Slot>
					<Slot $w={18}><Wifi /></Slot>
					<Slot $w={16}><Speaker /></Slot>
					<Lang $w={28}>ESP</Lang>
					<Clock $w={44}><span>05:38</span><span>22/2/2024</span></Clock>
					<Slot $w={38}><NotifyIcon /></Slot>
				</Tray>
			</Taskbar>

			<Tooltip>Columna: A</Tooltip>
			<Pointer width="12" height="16" viewBox="0 0 12 16">
				<path d="M1 1v12l3-3 2 5 2-1-2-5h4z" fill="#fff" stroke="#222" strokeWidth=".9" />
			</Pointer>
		</Window>
	);
}
